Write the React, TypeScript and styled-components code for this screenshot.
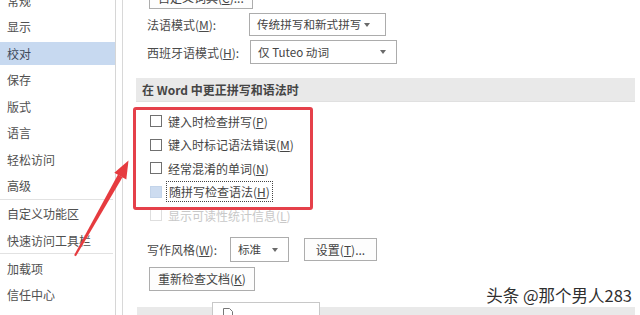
import React from "react";
import styled, { createGlobalStyle } from "styled-components";

const Global = createGlobalStyle`
  html, body { margin: 0; padding: 0; background: #fff; }
  body { font-family: "Noto Sans CJK SC", "Noto Sans", sans-serif; font-size: 12px; color: #444; }
`;

const Page = styled.div`
  position: relative;
  width: 640px;
  height: 315px;
  overflow: hidden;
  display: flex;
  background: #fff;
`;

const Nav = styled.nav`
  width: 115px;
  flex: none;
  border-right: 1px solid #d6d6d6;
  display: flex;
  flex-direction: column;
`;

const NavList = styled.div`
  margin-top: -11.5px;
  display: flex;
  flex-direction: column;
`;

const NavItem = styled.div<{ $active?: boolean }>`
  height: 23px;
  margin-bottom: 3.5px;
  line-height: 23px;
  padding-left: 7px;
  font-size: 12px;
  color: ${(p) => (p.$active ? "#3f4a5a" : "#505050")};
  background: ${(p) => (p.$active ? "#c7d9f0" : "transparent")};
  white-space: nowrap;
`;

const NavSep = styled.div`
  height: 1px;
  background: #e2e2e2;
  margin: -2px 2px 2.5px 0;
`;

const Content = styled.main`
  flex: 1;
  margin-left: 6px;
  border-left: 1px solid #d8d8d8;
  overflow: hidden;
`;

const Scroll = styled.div`
  margin-top: -14px;
  display: flex;
  flex-direction: column;
`;

const Form = styled.div`
  padding-left: 24px;
  display: flex;
  flex-direction: column;
`;

const Button = styled.div<{ $w?: number }>`
  box-sizing: border-box;
  height: 23px;
  width: ${(p) => (p.$w ? `${p.$w}px` : "auto")};
  padding: 0 8px;
  border: 1px solid #adadad;
  background: #fdfdfd;
  color: #444;
  font-size: 12px;
  line-height: 21px;
  text-align: center;
  white-space: nowrap;
`;

const TopButton = styled(Button)`
  align-self: flex-start;
  margin-left: 2px;
`;

const FieldRow = styled.div<{ $top: number }>`
  display: flex;
  align-items: center;
  margin-top: ${(p) => p.$top}px;
`;

const Label = styled.div<{ $w: number }>`
  width: ${(p) => p.$w}px;
  flex: none;
  white-space: nowrap;
  color: #4a4a4a;
`;

const Select = styled.div<{ $w: number; $h?: number; $arrow?: number }>`
  position: relative;
  box-sizing: border-box;
  width: ${(p) => p.$w}px;
  height: ${(p) => p.$h ?? 23}px;
  border: 1px solid #acacac;
  background: #fff;
  padding-left: 7px;
  line-height: ${(p) => (p.$h ?? 23) - 2}px;
  font-size: 11.6px;
  color: #444;
  white-space: nowrap;
  &::after {
    content: "";
    position: absolute;
    right: ${(p) => p.$arrow ?? 10}px;
    top: 50%;
    margin-top: -2px;
    border-left: 3.5px solid transparent;
    border-right: 3.5px solid transparent;
    border-top: 4px solid #6a6a6a;
  }
`;

const Section = styled.div`
  margin: 14px 5px 0 13px;
  height: 23px;
  background: #e9e9e9;
  box-shadow: 0 1px 0 #e0e0e0;
  padding-left: 6px;
  line-height: 23px;
  font-weight: bold;
  color: #454545;
  font-size: 12px;
  white-space: nowrap;
`;

const CheckList = styled.div`
  margin-top: 8.5px;
  padding-left: 27px;
  display: flex;
  flex-direction: column;
`;

const CheckRow = styled.div<{ $disabled?: boolean }>`
  height: 23.5px;
  display: flex;
  align-items: center;
  color: ${(p) => (p.$disabled ? "#c8c8c8" : "#454545")};
  white-space: nowrap;
`;

const Box = styled.span<{ $kind?: "normal" | "filled" | "disabled" }>`
  box-sizing: border-box;
  width: 12px;
  height: 12px;
  flex: none;
  margin-right: 6px;
  border: 1px solid
    ${(p) => (p.$kind === "filled" ? "#c3d4ea" : p.$kind === "disabled" ? "#dedede" : "#707070")};
  background: ${(p) => (p.$kind === "filled" ? "#cddcf0" : "#fff")};
`;

const Focus = styled.span`
  outline: 1px dotted #444;
  outline-offset: 1px;
  padding: 0 1px;
`;

const U = styled.span`
  text-decoration: underline;
  text-underline-offset: 1px;
`;

const SettingsButton = styled(Button)`
  margin-left: 15px;
`;

const RecheckButton = styled(Button)`
  align-self: flex-start;
  margin-top: 5px;
  margin-left: 2px;
  height: 24px;
  line-height: 22px;
`;

const BottomBar = styled.div`
  margin: 16px 5px 0 14px;
  height: 20px;
  background: #e9e9e9;
  display: flex;
`;

const Tab = styled.div`
  margin-left: 75px;
  margin-top: -5px;
  width: 108px;
  height: 25px;
  box-sizing: border-box;
  border: 1px solid #c8c8c8;
  background: #fff;
  padding: 3px 0 0 10px;
`;

const RedBox = styled.div`
  position: absolute;
  left: 133px;
  top: 107px;
  width: 180px;
  height: 103px;
  box-sizing: border-box;
  border: 3px solid #e5404a;
  border-radius: 3px;
  pointer-events: none;
`;

const Arrow = styled.svg`
  position: absolute;
  left: 0;
  top: 0;
  width: 640px;
  height: 315px;
  pointer-events: none;
`;

const Watermark = styled.div`
  position: absolute;
  right: 8px;
  top: 285px;
  font-size: 16.5px;
  line-height: 20px;
  color: #2f2f2f;
  white-space: nowrap;
  text-shadow: 0 0 2px #fff, 0 0 2px #fff, 1px 1px 1px #fff;
`;

const navGroups = [
  ["常规", "显示", "校对", "保存", "版式", "语言", "轻松访问", "高级"],
  ["自定义功能区", "快速访问工具栏"],
  ["加载项", "信任中心"],
];

export default function App() {
  return (
    <>
      <Global />
      <Page>
        <Nav>
          <NavList>
            {navGroups.map((g, gi) => (
              <React.Fragment key={gi}>
                {gi > 0 && <NavSep />}
                {g.map((t) => (
                  <NavItem key={t} $active={t === "校对"}>
                    {t}
                  </NavItem>
                ))}
              </React.Fragment>
            ))}
          </NavList>
        </Nav>
        <Content>
          <Scroll>
            <Form>
              <TopButton>
                自定义词典(<U>C</U>)...
              </TopButton>
              <FieldRow $top={4}>
                <Label $w={102}>
                  法语模式(<U>M</U>):
                </Label>
                <Select $w={137} $arrow={15}>传统拼写和新式拼写</Select>
              </FieldRow>
              <FieldRow $top={4}>
                <Label $w={103}>
                  西班牙语模式(<U>H</U>):
                </Label>
                <Select $w={147} $h={24}>仅 Tuteo 动词</Select>
              </FieldRow>
            </Form>
            <Section>在 Word 中更正拼写和语法时</Section>
            <CheckList>
              <CheckRow>
                <Box />
                键入时检查拼写(<U>P</U>)
              </CheckRow>
              <CheckRow>
                <Box />
                键入时标记语法错误(<U>M</U>)
              </CheckRow>
              <CheckRow>
                <Box />
                经常混淆的单词(<U>N</U>)
              </CheckRow>
              <CheckRow>
                <Box $kind="filled" />
                <Focus>
                  随拼写检查语法(<U>H</U>)
                </Focus>
              </CheckRow>
              <CheckRow $disabled>
                <Box $kind="disabled" />
                显示可读性统计信息(<U>L</U>)
              </CheckRow>
            </CheckList>
            <Form>
              <FieldRow $top={10}>
                <Label $w={83}>
                  写作风格(<U>W</U>):
                </Label>
                <Select $w={59} $h={25}>标准</Select>
                <SettingsButton $w={73}>
                  设置(<U>T</U>)...
                </SettingsButton>
              </FieldRow>
              <RecheckButton>
                重新检查文档(<U>K</U>)
              </RecheckButton>
            </Form>
            <BottomBar>
              <Tab>
                <svg width="10" height="12" viewBox="0 0 10 12">
                  <path d="M0.5 0.5h6l3 3v8h-9z" fill="#fff" stroke="#777" />
                </svg>
              </Tab>
            </BottomBar>
          </Scroll>
        </Content>
        <RedBox />
        <Arrow viewBox="0 0 640 315">
          <polygon
            points="122.5,177.3 118.0,174.6 74.1,255.2 75.9,256.3"
            fill="#e63b3f"
          />
          <polygon points="128.5,160.5 126.3,179.6 114.3,172.8" fill="#e63b3f" />
        </Arrow>
        <Watermark>头条 @那个男人283</Watermark>
      </Page>
    </>
  );
}
